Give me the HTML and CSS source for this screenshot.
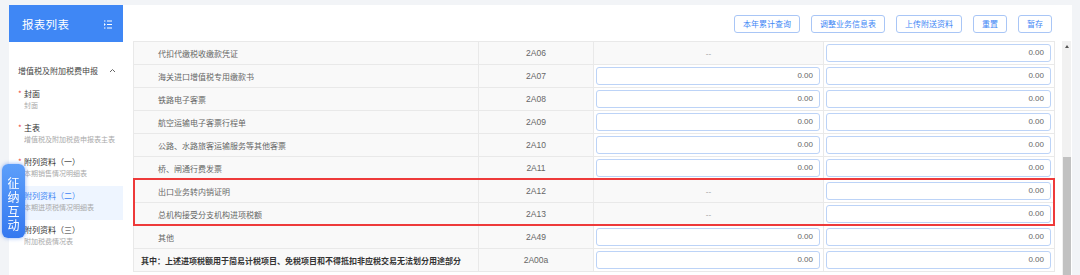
FILE: index.html
```html
<!DOCTYPE html>
<html lang="zh-CN">
<head>
    <meta charset="UTF-8">
    <title>报表列表</title>
    <link rel="stylesheet" href="styles.css">
</head>
<body>
    <div class="page">
        <div class="sidebar">
            <div class="side-head">
                <span class="side-title">报表列表</span>
                <svg class="menu-icon" width="8" height="9" viewBox="0 0 8 9">
                    <path d="M3 1H8M3 4.5H8M3 8H8M0 1H1.5M0 8H1.5" stroke="#fff" stroke-width="1" fill="none"/>
                    <path d="M0 3L1.8 4.5L0 6Z" fill="#fff"/>
                </svg>
            </div>
            <div class="group-title">
                <span>增值税及附加税费申报</span>
                <svg width="7" height="5" viewBox="0 0 7 5"><path d="M1 4L3.5 1.5L6 4" stroke="#666" stroke-width="1" fill="none"/></svg>
            </div>
            <div class="side-item">
                <div class="item-title"><i class="star">*</i>封面</div>
                <div class="item-sub">封面</div>
            </div>
            <div class="side-item">
                <div class="item-title"><i class="star">*</i>主表</div>
                <div class="item-sub">增值税及附加税费申报表主表</div>
            </div>
            <div class="side-item">
                <div class="item-title"><i class="star">*</i>附列资料（一）</div>
                <div class="item-sub">本期销售情况明细表</div>
            </div>
            <div class="side-item active">
                <div class="item-title">附列资料（二）</div>
                <div class="item-sub">本期进项税情况明细表</div>
            </div>
            <div class="side-item">
                <div class="item-title">附列资料（三）</div>
                <div class="item-sub">附加税费情况表</div>
            </div>
        </div>

        <div class="main">
            <div class="toolbar">
                <span class="btn">本年累计查询</span>
                <span class="btn">调整业务信息表</span>
                <span class="btn">上传附送资料</span>
                <span class="btn">重置</span>
                <span class="btn">暂存</span>
            </div>
            <div class="content">
                <div class="table-wrap">
                    <table class="grid">
                        <colgroup>
                            <col style="width: 345px">
                            <col style="width: 115px">
                            <col style="width: 230px">
                            <col style="width: 231px">
                        </colgroup>
                        <tr>
                            <td class="name">代扣代缴税收缴款凭证</td>
                            <td class="code">2A06</td>
                            <td class="empty">--</td>
                            <td class="cell"><div class="num">0.00</div></td>
                        </tr>
                        <tr>
                            <td class="name">海关进口增值税专用缴款书</td>
                            <td class="code">2A07</td>
                            <td class="cell"><div class="num">0.00</div></td>
                            <td class="cell"><div class="num">0.00</div></td>
                        </tr>
                        <tr>
                            <td class="name">铁路电子客票</td>
                            <td class="code">2A08</td>
                            <td class="cell"><div class="num">0.00</div></td>
                            <td class="cell"><div class="num">0.00</div></td>
                        </tr>
                        <tr>
                            <td class="name">航空运输电子客票行程单</td>
                            <td class="code">2A09</td>
                            <td class="cell"><div class="num">0.00</div></td>
                            <td class="cell"><div class="num">0.00</div></td>
                        </tr>
                        <tr>
                            <td class="name">公路、水路旅客运输服务等其他客票</td>
                            <td class="code">2A10</td>
                            <td class="cell"><div class="num">0.00</div></td>
                            <td class="cell"><div class="num">0.00</div></td>
                        </tr>
                        <tr>
                            <td class="name">桥、闸通行费发票</td>
                            <td class="code">2A11</td>
                            <td class="cell"><div class="num">0.00</div></td>
                            <td class="cell"><div class="num">0.00</div></td>
                        </tr>
                        <tr>
                            <td class="name">出口业务转内销证明</td>
                            <td class="code">2A12</td>
                            <td class="empty">--</td>
                            <td class="cell"><div class="num">0.00</div></td>
                        </tr>
                        <tr>
                            <td class="name">总机构接受分支机构进项税额</td>
                            <td class="code">2A13</td>
                            <td class="empty">--</td>
                            <td class="cell"><div class="num">0.00</div></td>
                        </tr>
                        <tr>
                            <td class="name">其他</td>
                            <td class="code">2A49</td>
                            <td class="cell"><div class="num">0.00</div></td>
                            <td class="cell"><div class="num">0.00</div></td>
                        </tr>
                        <tr>
                            <td class="name strong">其中：上述进项税额用于简易计税项目、免税项目和不得抵扣非应税交易无法划分用途部分</td>
                            <td class="code">2A00a</td>
                            <td class="cell"><div class="num">0.00</div></td>
                            <td class="cell"><div class="num">0.00</div></td>
                        </tr>
                    </table>
                    <div class="mark"></div>
                </div>
                <div class="scrollbar">
                    <div class="arrow"></div>
                    <div class="thumb"></div>
                </div>
            </div>
        </div>
    </div>

    <div class="float-tab">征<br>纳<br>互<br>动</div>
</body>
</html>
```

FILE: styles.css
```css
*{margin: 0;padding: 0;box-sizing: border-box;}
body{width: 1080px;height: 275px;overflow: hidden;background: #f2f4f7;font-family: "Liberation Sans", "Noto Sans CJK SC", sans-serif;font-size: 8px;color: #333;}
.page{display: flex;padding: 5px 0 0 9px;height: 275px;}

/* 左侧报表列表 */
.sidebar{width: 114px;background: #fff;display: flex;flex-direction: column;}
.side-head{height: 37px;background: #3f87f5;display: flex;align-items: center;justify-content: space-between;padding: 0 11px 0 13px;}
.side-title{color: #fff;font-size: 11.5px;font-family: "Noto Sans CJK SC", sans-serif;letter-spacing: 0.3px;}
.menu-icon{margin-top: 1px;}
.group-title{height: 24px;margin-top: 16px;display: flex;align-items: center;justify-content: space-between;padding: 0 7px 0 9px;font-family: "Noto Sans CJK SC", sans-serif;color: #444;}
.side-item{height: 34px;padding: 4px 0 0 15px;overflow: hidden;}
.group-title + .side-item{margin-top: 2px;}
.item-title{height: 12px;line-height: 12px;font-family: "Noto Sans CJK SC", sans-serif;color: #333;white-space: nowrap;}
.item-sub{line-height: 11px;font-size: 7px;color: #aaa;font-family: "Noto Sans CJK SC", sans-serif;white-space: nowrap;overflow: hidden;}
.star{font-style: normal;color: #f0443c;margin-left: -6px;margin-right: 1px;display: inline-block;width: 5px;}
.side-item.active{background: #eef5ff;}
.side-item.active .item-title{color: #3f87f5;}

/* 右侧主体 */
.main{width: 949px;background: #fff;display: flex;flex-direction: column;}
.toolbar{height: 36px;display: flex;justify-content: flex-end;align-items: flex-start;gap: 11px;padding: 10px 20px 0 0;}
.btn{height: 18px;line-height: 16px;padding: 0 8px;border: 1px solid #a9c6f6;border-radius: 3px;color: #3f87f5;font-family: "Noto Sans CJK SC", sans-serif;font-size: 8px;white-space: nowrap;}

.content{display: flex;padding-left: 10px;flex: 1;}
.table-wrap{position: relative;width: 921px;}
.grid{width: 921px;table-layout: fixed;border-collapse: collapse;}
.grid td{height: 23px;border: 1px solid #e9e9e9;background: #f9f9f9;color: #666;white-space: nowrap;overflow: hidden;}
.grid .name{padding-left: 24px;font-family: "Noto Sans CJK SC", sans-serif;}
.grid .name.strong{padding-left: 7px;font-weight: bold;color: #333;}
.grid .code{text-align: center;color: #666;font-size: 8.5px;}
.grid .empty{text-align: center;color: #999;}
.grid .cell{padding: 0 3px 0 2px;background: #fff;}
.num{height: 18px;line-height: 16px;border: 1px solid #bcd3f7;border-radius: 3px;background: #fff;text-align: right;padding-right: 6px;color: #666;}

.mark{position: absolute;left: 0;top: 137px;width: 922px;height: 48px;border: 2px solid #ee3a3a;}

.scrollbar{width: 9px;margin-left: 8px;background: #f1f1f1;position: relative;}
.arrow{width: 0;height: 0;margin: 4px auto 0;border-left: 2px solid transparent;border-right: 2px solid transparent;border-bottom: 3px solid #555;}
.thumb{position: absolute;left: 1px;right: 0;top: 116px;bottom: 0;background: #c1c1c1;}

/* 悬浮按钮 */
.float-tab{position: fixed;left: 2px;top: 164px;width: 23px;height: 74px;padding-top: 12px;border-radius: 6px;background: linear-gradient(180deg, #5d9ffa, #3478f0);box-shadow: 0 0 4px rgba(60, 120, 240, 0.6);color: #fff;font-family: "Noto Sans CJK SC", sans-serif;font-size: 12px;line-height: 14px;text-align: center;}
```
